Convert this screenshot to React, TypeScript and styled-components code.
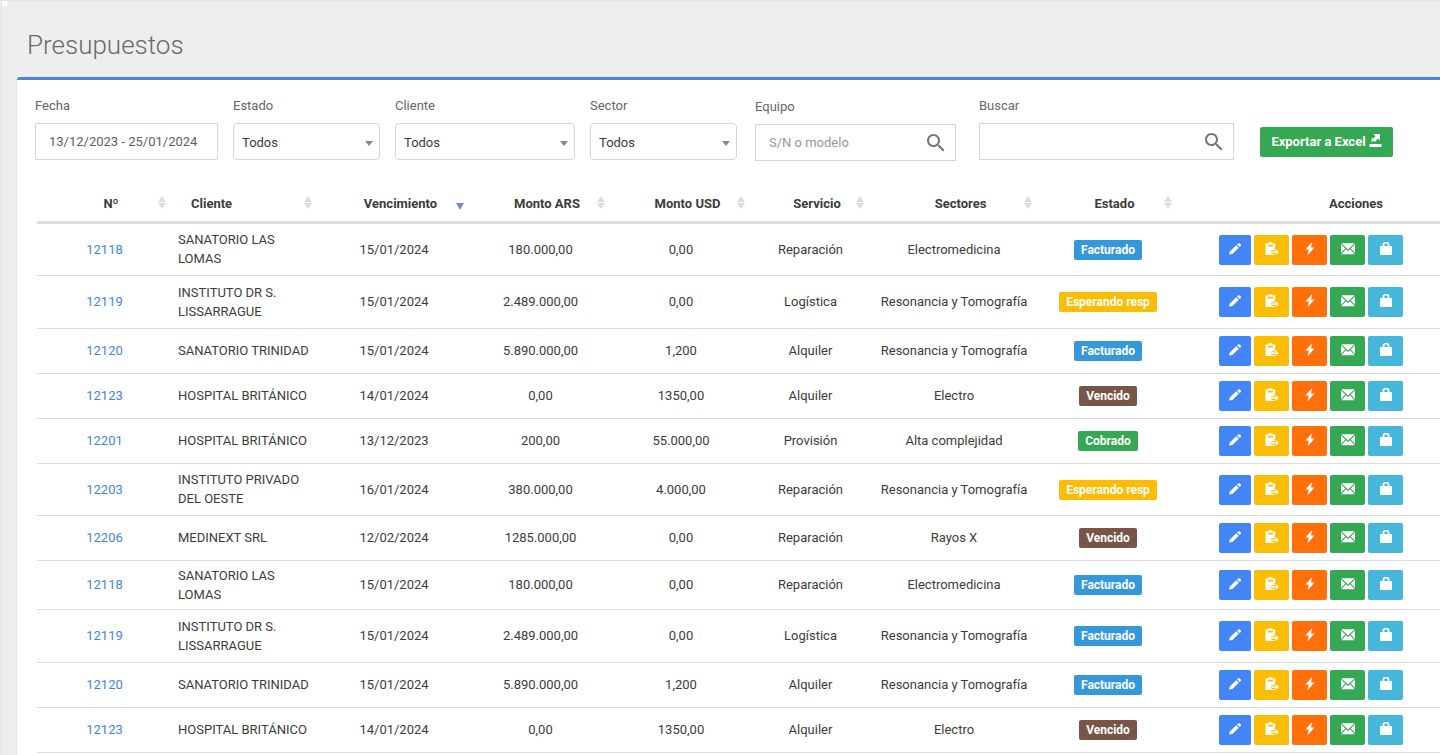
import React from 'react';
import styled, { createGlobalStyle } from 'styled-components';

const GlobalStyle = createGlobalStyle`
  * { box-sizing: border-box; }
  body {
    margin: 0;
    background: #eeeeee;
    color: #3c3c3c;
    font-family: Roboto, "Liberation Sans", sans-serif;
    font-size: 13px;
    line-height: 19px;
  }
  input, select, button { font: inherit; color: inherit; }
`;

const Page = styled.div`
  position: relative;
  display: flex;
  flex-direction: column;
  min-height: 100vh;
  margin-left: 1px;
  border-top: 1px solid #e4e4e4;
  border-left: 1px solid #e2e2e2;
  padding-left: 15px;
  overflow: hidden;
`;

const Corner = styled.div`
  position: absolute;
  top: 0;
  left: 0;
  width: 5px;
  height: 5px;
  background: #ffffff;
`;

const Title = styled.h1`
  margin: 0;
  padding: 28px 0 16px 10px;
  font-size: 26px;
  line-height: 32px;
  font-weight: 300;
  color: #6a6a6a;
`;

const Card = styled.main`
  flex: 1;
  background: #ffffff;
  border-top: 3px solid #4a86e4;
  border-radius: 3px 0 0 0;
  box-shadow: 0 1px 2px rgba(0, 0, 0, 0.15);
  padding: 16px 0 0 18px;
`;

const Filters = styled.form`
  display: flex;
  align-items: flex-start;
`;

const Field = styled.div<{ $width: number; $gap: number; $drop?: boolean }>`
  display: flex;
  flex-direction: column;
  gap: 8px;
  width: ${(p) => p.$width}px;
  margin-right: ${(p) => p.$gap}px;
  padding-top: ${(p) => (p.$drop ? 1 : 0)}px;
`;

const Label = styled.label`
  color: #666666;
`;

const Control = styled.span<{ $radius?: number }>`
  display: flex;
  align-items: center;
  height: 37px;
  border: 1px solid #d3d5da;
  border-radius: ${(p) => p.$radius ?? 0}px;
  background: #ffffff;
`;

const TextInput = styled.input`
  flex: 1;
  min-width: 0;
  height: 100%;
  border: 0;
  outline: 0;
  background: transparent;
  padding: 0 0 0 13px;
  color: #606060;
  &::placeholder { color: #999999; opacity: 1; }
`;

const Select = styled.select`
  flex: 1;
  min-width: 0;
  height: 100%;
  appearance: none;
  border: 0;
  outline: 0;
  background: transparent;
  padding: 2px 0 0 8px;
  color: #3c3c3c;
`;

const Caret = styled.span`
  margin-right: 6px;
  margin-top: 3px;
  border: 4px solid transparent;
  border-top: 5px solid #888888;
  border-bottom: 0;
  pointer-events: none;
`;

const SearchGlyph = styled.svg`
  flex: none;
  width: 24px;
  height: 24px;
  margin-right: 7px;
  fill: #757575;
`;

const ExportButton = styled.button`
  display: flex;
  align-items: center;
  justify-content: center;
  gap: 3px;
  width: 133px;
  height: 30px;
  margin-top: 31px;
  padding: 0 0 2px;
  border: 0;
  border-radius: 2px;
  background: #34a853;
  color: #ffffff;
  font-weight: 700;
  white-space: nowrap;
`;

const Table = styled.table`
  width: calc(100% - 2px);
  min-width: 1380px;
  margin: 24px 0 0 2px;
  border-collapse: separate;
  border-spacing: 0;
  table-layout: fixed;
`;

const HeadCell = styled.th<{ $align?: string }>`
  height: 39px;
  padding: 0 6px 0 ${(p) => (p.$align === 'left' ? 19 : 27)}px;
  border-bottom: 3px solid #dcdcdc;
  font-weight: 700;
  text-align: ${(p) => p.$align ?? 'center'};
`;

const ActionsHead = styled(HeadCell)`
  padding: 0 0 0 94px;
`;

const SortButton = styled.button`
  display: flex;
  align-items: center;
  width: 100%;
  padding: 0;
  border: 0;
  background: transparent;
  font-weight: 700;
  text-align: inherit;
`;

const SortLabel = styled.span`
  flex: 1;
`;

const SortGlyph = styled.svg`
  flex: none;
  width: 8px;
  height: 14px;
`;

const Row = styled.tr<{ $height: number }>`
  height: ${(p) => p.$height}px;
`;

const Cell = styled.td<{ $align?: string }>`
  padding: 0 6px;
  border-bottom: 1px solid #dcdcdc;
  text-align: ${(p) => p.$align ?? 'center'};
  vertical-align: middle;
`;

const TextCell = styled(Cell)`
  padding-bottom: 1px;
`;

const ClientName = styled.div`
  max-width: 132px;
`;

const NumberLink = styled.a`
  color: #4285e0;
  text-decoration: none;
`;

const Badge = styled.span<{ $color: string }>`
  display: inline-block;
  padding: 0 7px;
  border-radius: 2px;
  background: ${(p) => p.$color};
  color: #ffffff;
  font-size: 12px;
  line-height: 20px;
  font-weight: 700;
  vertical-align: middle;
`;

const Actions = styled.div`
  display: flex;
  gap: 3px;
  padding-left: 35px;
`;

const ActionButton = styled.button<{ $color: string; $narrow?: boolean }>`
  display: flex;
  align-items: center;
  justify-content: center;
  width: ${(p) => (p.$narrow ? 32 : 35)}px;
  height: 30px;
  padding: 0 0 2px;
  border: 0;
  border-radius: 2px;
  background: ${(p) => p.$color};
  svg { width: 14px; height: 14px; fill: #ffffff; }
`;

const Pencil = () => (
  <svg viewBox="0 0 14 14"><path d="M1 12.500l.8-3.100L8.200 3.200l2.600 2.600L4.400 12zM9 2.500l1.200-1q.8-.5 1.500 0l1.100 1.100q.5.700 0 1.400l-1.200 1.100z" /></svg>
);
const Clipboard = () => (
  <svg viewBox="0 0 14 14">
    <path d="M.5 1.500h3V.3h3.800v1.200h3v11.500H.5zM2.800 2.800v1.600h5.200V2.800z" fillRule="evenodd" />
    <path d="M7.200 8.600h3.200V6.200L14.500 9.900l-4.100 3.800v-2.400H7.200z" fill="#fbbc05" stroke="#fbbc05" strokeWidth="1.400" />
    <path d="M7.200 8.800h3.600V7l3 2.900-3 2.900V11H7.200zM8.400 9.600v.7h2.200v-.7z" fillRule="evenodd" />
  </svg>
);
const Bolt = () => (
  <svg viewBox="0 0 14 14"><path d="M9.200 0L2.400 7.600h3.400L4.400 13.400l7.200-7.800H8z" /></svg>
);
const Mail = () => (
  <svg viewBox="0 0 14 14"><path d="M.4 1.200h13.200L7 7.400zM0 2.200l4.300 4.300L0 11zM14 2.200v8.800L9.700 6.500zM.2 12.200l4.800-5L7 9l2-1.800 4.800 5z" /></svg>
);
const Bag = () => (
  <svg viewBox="0 0 14 14"><path d="M1 4h2.600V1.600L5.200 0h3.600l1.600 1.600V4H13v9H1zM5.400 4h3.200V2.200l-.5-.6H5.900l-.5.600z" fillRule="evenodd" /></svg>
);
const Search = () => (
  <SearchGlyph viewBox="0 0 24 24" aria-hidden="true">
    <path d="M15.5 14h-.79l-.28-.27C15.41 12.59 16 11.11 16 9.5 16 5.91 13.09 3 9.5 3S3 5.91 3 9.5 5.91 16 9.5 16c1.61 0 3.09-.59 4.23-1.57l.27.28v.79l5 4.99L20.49 19l-4.99-5zm-6 0C7.01 14 5 11.99 5 9.5S7.01 5 9.5 5 14 7.01 14 9.5 11.99 14 9.5 14z" />
  </SearchGlyph>
);
const ExportGlyph = () => (
  <svg width="13" height="14" viewBox="0 0 13 14" fill="#ffffff" aria-hidden="true">
    <path d="M4.500 0H11v6.500L9 4.600 5.800 8 4.600 6.800 3 8 2 7l1.400-1.400L2.200 5l1-1 1.200.6L6.600 2.200zM.5 10h12v3H.5z" />
  </svg>
);

const SortIcon = ({ active }: { active?: boolean }) => (
  <SortGlyph viewBox="0 0 8 14" aria-hidden="true">
    {!active && <path d="M0 6L4 0l4 6z" fill="#dcdcdc" />}
    <path d={active ? 'M0 7h8l-4 7z' : 'M0 7h8l-4 6z'} fill={active ? '#7a86d8' : '#dcdcdc'} />
  </SortGlyph>
);

const statusColors: Record<string, string> = {
  Facturado: '#3498db',
  'Esperando resp': '#fbbc05',
  Vencido: '#795548',
  Cobrado: '#34a853',
};

const columns = [
  { title: 'Nº', width: 135 },
  { title: 'Cliente', width: 146, align: 'left' },
  { title: 'Vencimiento', width: 152, active: true },
  { title: 'Monto ARS', width: 141 },
  { title: 'Monto USD', width: 140 },
  { title: 'Servicio', width: 119 },
  { title: 'Sectores', width: 168 },
  { title: 'Estado', width: 140 },
];

const actions = [
  { name: 'Editar', color: '#4285f4', icon: <Pencil />, narrow: true },
  { name: 'Copiar', color: '#fbbc05', icon: <Clipboard /> },
  { name: 'Ejecutar', color: '#ff6f0a', icon: <Bolt /> },
  { name: 'Enviar', color: '#34a853', icon: <Mail /> },
  { name: 'Archivar', color: '#46b6da', icon: <Bag /> },
];

type Budget = [string, string, string, string, string, string, string, string, number];

const RT = 'Resonancia y Tomografía';
const budgets: Budget[] = [
  ['12118', 'SANATORIO LAS LOMAS', '15/01/2024', '180.000,00', '0,00', 'Reparación', 'Electromedicina', 'Facturado', 52],
  ['12119', 'INSTITUTO DR S. LISSARRAGUE', '15/01/2024', '2.489.000,00', '0,00', 'Logística', RT, 'Esperando resp', 53],
  ['12120', 'SANATORIO TRINIDAD', '15/01/2024', '5.890.000,00', '1,200', 'Alquiler', RT, 'Facturado', 45],
  ['12123', 'HOSPITAL BRITÁNICO', '14/01/2024', '0,00', '1350,00', 'Alquiler', 'Electro', 'Vencido', 45],
  ['12201', 'HOSPITAL BRITÁNICO', '13/12/2023', '200,00', '55.000,00', 'Provisión', 'Alta complejidad', 'Cobrado', 45],
  ['12203', 'INSTITUTO PRIVADO DEL OESTE', '16/01/2024', '380.000,00', '4.000,00', 'Reparación', RT, 'Esperando resp', 52],
  ['12206', 'MEDINEXT SRL', '12/02/2024', '1285.000,00', '0,00', 'Reparación', 'Rayos X', 'Vencido', 45],
  ['12118', 'SANATORIO LAS LOMAS', '15/01/2024', '180.000,00', '0,00', 'Reparación', 'Electromedicina', 'Facturado', 49],
  ['12119', 'INSTITUTO DR S. LISSARRAGUE', '15/01/2024', '2.489.000,00', '0,00', 'Logística', RT, 'Facturado', 53],
  ['12120', 'SANATORIO TRINIDAD', '15/01/2024', '5.890.000,00', '1,200', 'Alquiler', RT, 'Facturado', 45],
  ['12123', 'HOSPITAL BRITÁNICO', '14/01/2024', '0,00', '1350,00', 'Alquiler', 'Electro', 'Vencido', 45],
];

const SelectField = ({ id, label, width, gap }: { id: string; label: string; width: number; gap: number }) => (
  <Field $width={width} $gap={gap}>
    <Label htmlFor={id}>{label}</Label>
    <Control $radius={4}>
      <Select id={id}>
        <option>Todos</option>
      </Select>
      <Caret />
    </Control>
  </Field>
);

export default function App() {
  return (
    <Page>
      <GlobalStyle />
      <Corner />
      <Title>Presupuestos</Title>
      <Card>
        <Filters onSubmit={(e) => e.preventDefault()}>
          <Field $width={183} $gap={15}>
            <Label htmlFor="fecha">Fecha</Label>
            <Control $radius={1}>
              <TextInput id="fecha" defaultValue="13/12/2023 - 25/01/2024" />
            </Control>
          </Field>
          <SelectField id="estado" label="Estado" width={147} gap={15} />
          <SelectField id="cliente" label="Cliente" width={180} gap={15} />
          <SelectField id="sector" label="Sector" width={147} gap={18} />
          <Field $width={201} $gap={23} $drop>
            <Label htmlFor="equipo">Equipo</Label>
            <Control>
              <TextInput id="equipo" placeholder="S/N o modelo" />
              <Search />
            </Control>
          </Field>
          <Field $width={255} $gap={26}>
            <Label htmlFor="buscar">Buscar</Label>
            <Control>
              <TextInput id="buscar" />
              <Search />
            </Control>
          </Field>
          <ExportButton type="button">
            Exportar a Excel
            <ExportGlyph />
          </ExportButton>
        </Filters>
        <Table>
          <colgroup>
            {columns.map((c) => (
              <col key={c.title} width={c.width} />
            ))}
            <col />
          </colgroup>
          <thead>
            <tr>
              {columns.map((c) => (
                <HeadCell key={c.title} $align={c.align}>
                  <SortButton type="button">
                    <SortLabel>{c.title}</SortLabel>
                    <SortIcon active={c.active} />
                  </SortButton>
                </HeadCell>
              ))}
              <ActionsHead>Acciones</ActionsHead>
            </tr>
          </thead>
          <tbody>
            {budgets.map(([num, client, due, ars, usd, service, sector, status, height], i) => (
              <Row key={i} $height={height}>
                <TextCell><NumberLink href="#">{num}</NumberLink></TextCell>
                <TextCell $align="left"><ClientName>{client}</ClientName></TextCell>
                <TextCell>{due}</TextCell>
                <TextCell>{ars}</TextCell>
                <TextCell>{usd}</TextCell>
                <TextCell>{service}</TextCell>
                <TextCell>{sector}</TextCell>
                <Cell><Badge $color={statusColors[status]}>{status}</Badge></Cell>
                <Cell $align="left">
                  <Actions>
                    {actions.map((a) => (
                      <ActionButton key={a.name} type="button" aria-label={a.name} $color={a.color} $narrow={a.narrow}>
                        {a.icon}
                      </ActionButton>
                    ))}
                  </Actions>
                </Cell>
              </Row>
            ))}
          </tbody>
        </Table>
      </Card>
    </Page>
  );
}
